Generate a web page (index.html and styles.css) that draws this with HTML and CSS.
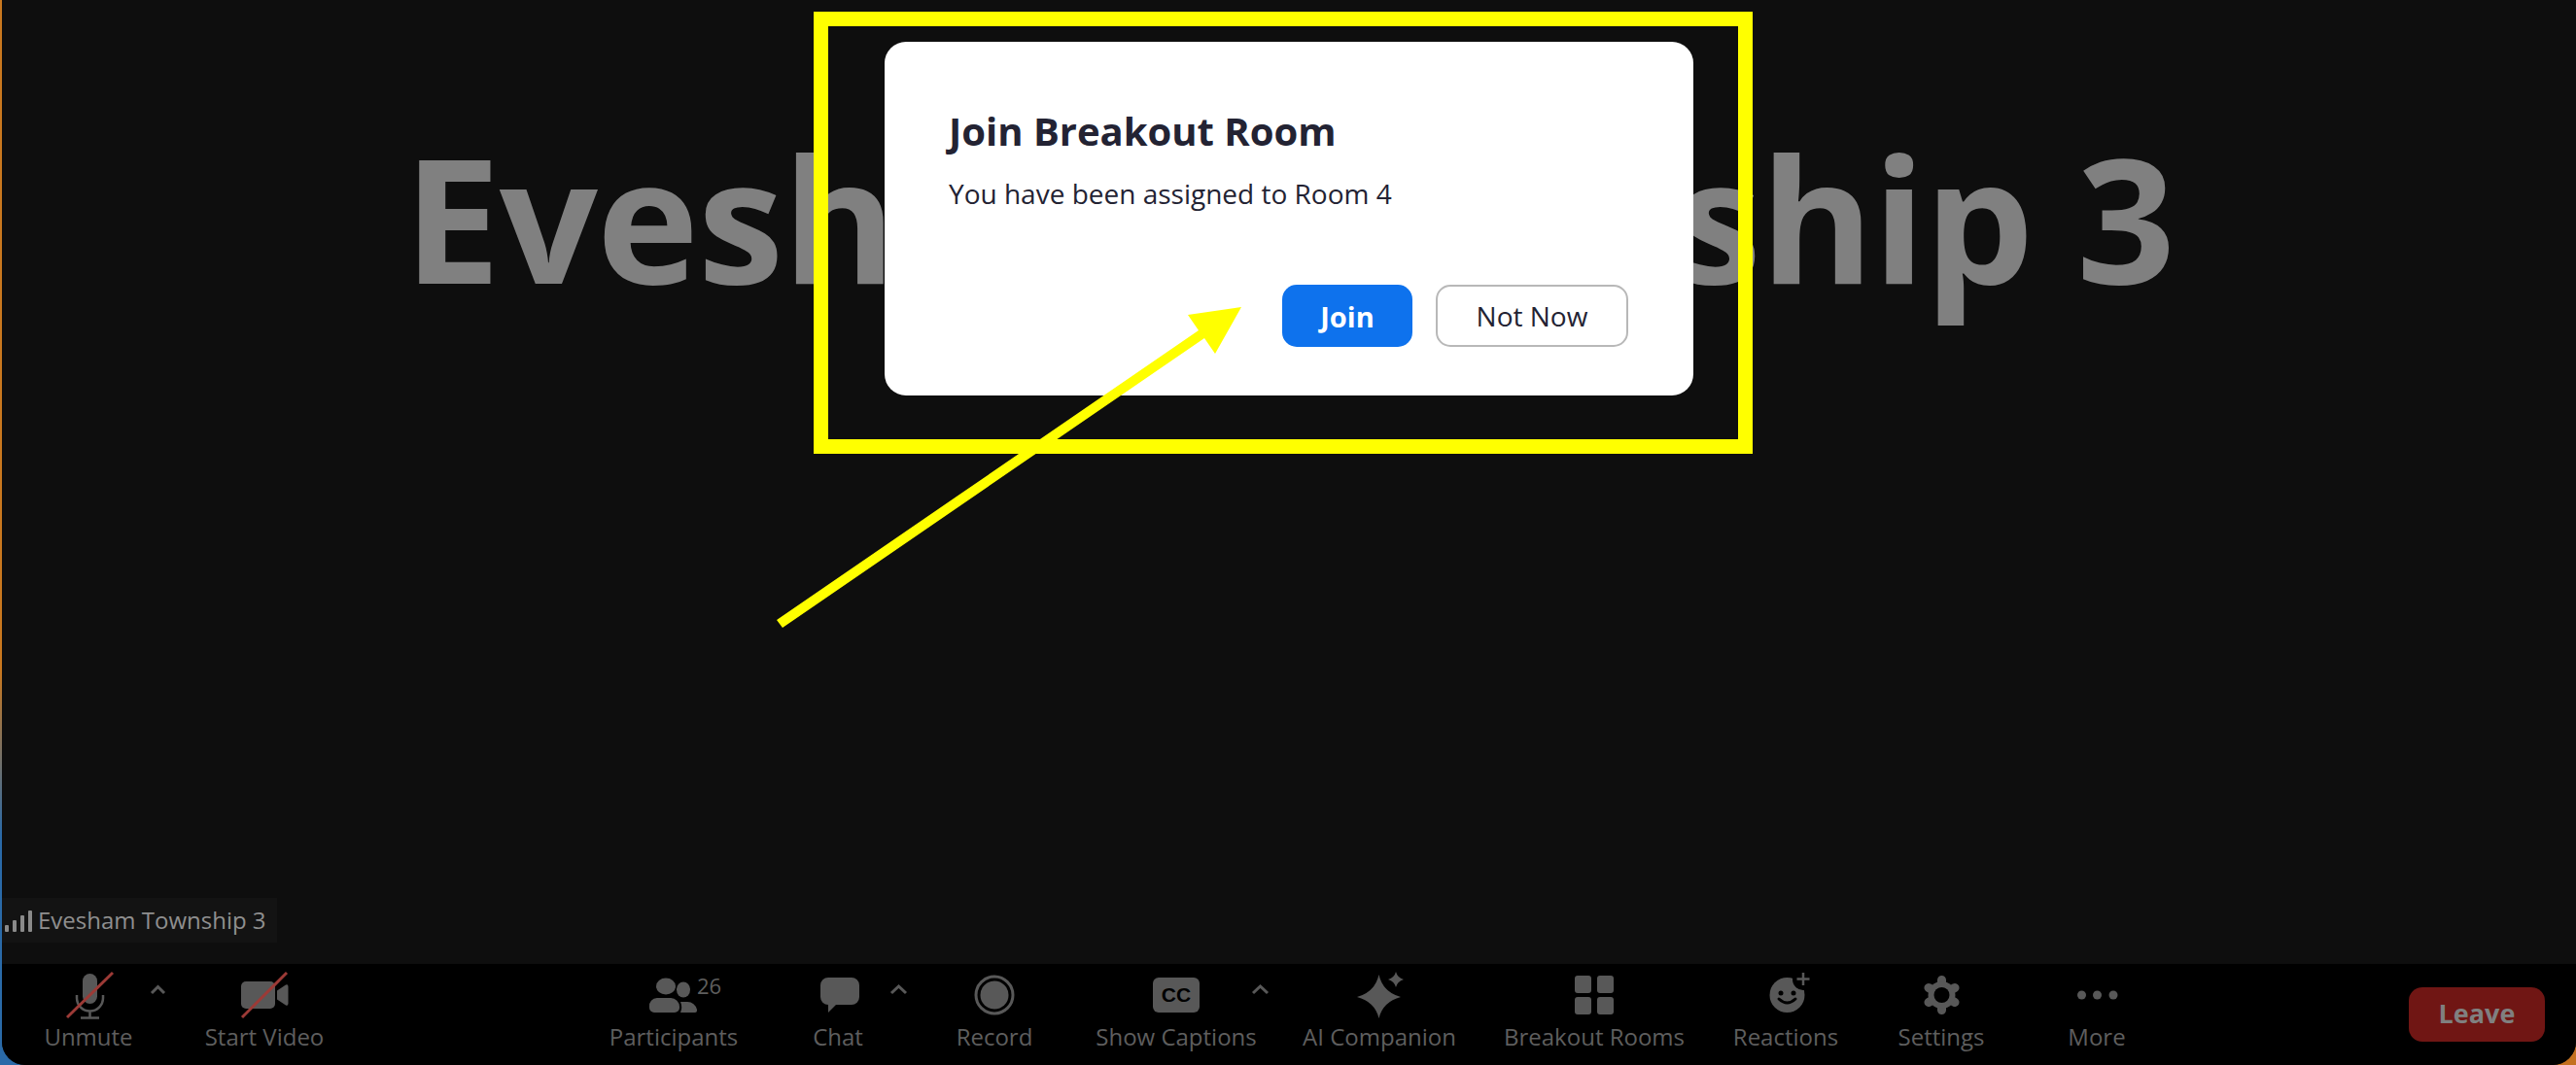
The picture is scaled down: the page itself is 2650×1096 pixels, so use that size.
FILE: index.html
```html
<!DOCTYPE html>
<html lang="en">
<head>
<meta charset="utf-8">
<title>Join Breakout Room</title>
<link rel="stylesheet" href="styles.css">
</head>
<body>
<div class="screen">
  <div class="app">
    <main class="stage">
      <h1 class="speaker">Evesham Township 3</h1>
      <div class="nametag">
        <span class="signal"><i class="b1"></i><i class="b2"></i><i class="b3"></i><i class="b4"></i></span>
        <span>Evesham Township 3</span>
      </div>
    </main>
    <nav class="toolbar">
      <div class="group-left">
        <div class="tool">
          <svg class="icon" viewBox="60 1000 62 52" width="62" height="52">
            <rect class="f" x="85" y="1002" width="15" height="31" rx="7.5"/>
            <path class="s thin" d="M79 1024v3a13.5 13.5 0 0 0 27 0v-3M92.500 1041v6M83 1047.500h19"/>
            <path class="slash" d="M116 1001 69 1047"/>
            <path class="s chev" d="M156 1022l6.500-6.500 6.500 6.500"/>
          </svg>
          <span class="label">Unmute</span>
        </div>
        <div class="tool">
          <svg class="icon" viewBox="241 1000 62 52" width="62" height="52">
            <rect class="f" x="248" y="1010" width="35" height="28" rx="5"/>
            <path class="f" d="M285 1019.500l9-6q2.500-1 2.500 2v17q0 3-2.500 2l-9-6z"/>
            <path class="slash" d="M295 1001 249 1047"/>
          </svg>
          <span class="label">Start Video</span>
        </div>
      </div>
      <div class="group-center">
        <div class="tool">
          <svg class="icon" viewBox="662 1000 62 52" width="62" height="52">
            <ellipse class="f" cx="685" cy="1015" rx="10" ry="8.500"/>
            <ellipse class="f" cx="703" cy="1018.500" rx="7" ry="8"/>
            <path class="f" d="M668 1036a8 8 0 0 1 8-9h14a9 9 0 0 1 9 9v1a5 5 0 0 1-5 5h-21a5 5 0 0 1-5-5z"/>
            <path class="f" d="M700 1031h7a10 10 0 0 1 10 8v1a2 2 0 0 1-2 2h-15a14 14 0 0 0 0-11z"/>
            <text class="count" x="717" y="1023">26</text>
          </svg>
          <span class="label">Participants</span>
        </div>
        <div class="tool">
          <svg class="icon" viewBox="831 1000 62 52" width="62" height="52">
            <path class="f" d="M852 1006h24a8 8 0 0 1 8 8v12a8 8 0 0 1-8 8h-16l-8 8v-8a8 8 0 0 1-8-8v-12a8 8 0 0 1 8-8z"/>
            <path class="s chev" d="M917 1022l7.500-7 7.500 7"/>
          </svg>
          <span class="label">Chat</span>
        </div>
        <div class="tool">
          <svg class="icon" viewBox="992 1000 62 52" width="62" height="52">
            <circle class="s" cx="1023" cy="1024" r="19"/>
            <circle class="f" cx="1023" cy="1024" r="14.500"/>
          </svg>
          <span class="label">Record</span>
        </div>
        <div class="tool">
          <svg class="icon" viewBox="1179 1000 62 52" width="62" height="52">
            <rect class="f" x="1186" y="1006" width="48" height="36" rx="6"/>
            <text class="cc" x="1210" y="1031">CC</text>
            <path class="s chev" d="M1289 1022l7.500-7 7.500 7"/>
          </svg>
          <span class="label">Show Captions</span>
        </div>
        <div class="tool">
          <svg class="icon" viewBox="1388 1000 62 52" width="62" height="52">
            <path class="f" d="M1418.500 1003q4 18 22.500 23-18.500 5-22.500 22-4-17-22.500-22 18.500-5 22.500-23z"/>
            <path class="f" d="M1436 1000q1.500 6 8 8-6.500 2-8 8-1.500-6-8-8 6.500-2 8-8z"/>
          </svg>
          <span class="label">AI Companion</span>
        </div>
        <div class="tool">
          <svg class="icon" viewBox="1609 1000 62 52" width="62" height="52">
            <rect class="f" x="1620" y="1004" width="17" height="18" rx="3"/>
            <rect class="f" x="1643" y="1004" width="17" height="18" rx="3"/>
            <rect class="f" x="1620" y="1026" width="17" height="18" rx="3"/>
            <rect class="f" x="1643" y="1026" width="17" height="18" rx="3"/>
          </svg>
          <span class="label">Breakout Rooms</span>
        </div>
        <div class="tool">
          <svg class="icon" viewBox="1806 1000 62 52" width="62" height="52">
            <circle class="f" cx="1838.500" cy="1024" r="18"/>
            <circle class="cut" cx="1855" cy="1008" r="11"/>
            <circle class="k" cx="1832" cy="1022" r="2.500"/>
            <circle class="k" cx="1845" cy="1022" r="2.500"/>
            <path class="smile" d="M1830 1028q8.500 8 17 0"/>
            <path class="plus" d="M1855 1001v13M1848.500 1007.500h13"/>
          </svg>
          <span class="label">Reactions</span>
        </div>
        <div class="tool">
          <svg class="icon" viewBox="1966 1000 62 52" width="62" height="52">
            <path class="gear" d="M1997.500 1008.500v31M1984 1016.500l27 15M2011 1016.500l-27 15"/>
            <circle class="f" cx="1997.500" cy="1024" r="14"/>
            <circle class="k" cx="1997.500" cy="1024" r="8"/>
          </svg>
          <span class="label">Settings</span>
        </div>
        <div class="tool">
          <svg class="icon" viewBox="2126 1000 62 52" width="62" height="52">
            <circle class="f" cx="2141.500" cy="1024" r="4.500"/>
            <circle class="f" cx="2157.500" cy="1024" r="4.500"/>
            <circle class="f" cx="2174" cy="1024" r="4.500"/>
          </svg>
          <span class="label">More</span>
        </div>
      </div>
      <button class="leave">Leave</button>
    </nav>
  </div>

  <section class="dialog">
    <h2 class="dialog-title">Join Breakout Room</h2>
    <p class="dialog-text">You have been assigned to Room 4</p>
    <div class="dialog-actions">
      <button class="btn btn-primary">Join</button>
      <button class="btn btn-outline">Not Now</button>
    </div>
  </section>

  <div class="callout-box"></div>
  <svg class="callout-arrow" viewBox="0 0 2650 1096" width="2650" height="1096">
    <polygon points="799,638 1233,340 1222,324 1277,316 1250,364 1239,348 805,646"/>
  </svg>
</div>
</body>
</html>
```

FILE: styles.css
```css
* { box-sizing: border-box; }
html, body { margin: 0; padding: 0; height: 100%; }
body {
  font-family: "Open Sans", "Liberation Sans", sans-serif;
  overflow: hidden;
  background:
    linear-gradient(to bottom, #c9781f 0, #c9781f 690px, #2a6aa8 860px, #2a6aa8 100%) left top / 50% 100% no-repeat,
    #c4701f;
}
.screen { position: relative; width: 2650px; height: 1096px; }
.app {
  margin-left: 2px;
  height: 1096px;
  display: flex;
  flex-direction: column;
  background: #0e0e0e;
  border-radius: 0 0 24px 24px;
  overflow: hidden;
}

.stage { flex: 1; display: flex; flex-direction: column; }
.speaker {
  margin: 0;
  padding-top: 112px;
  text-align: center;
  font-size: 178px;
  letter-spacing: -1.2px;
  line-height: 222px;
  font-weight: 700;
  color: #808080;
  white-space: nowrap;
}
.nametag {
  margin-top: auto;
  margin-bottom: 22px;
  width: 283px;
  height: 46px;
  padding-left: 37px;
  padding-bottom: 2px;
  display: flex;
  align-items: center;
  position: relative;
  background: #131313;
  color: #8f8f8f;
  font-size: 24px;
  white-space: nowrap;
}
.signal {
  position: absolute;
  left: 3px;
  bottom: 11px;
  display: flex;
  align-items: flex-end;
  gap: 4px;
}
.signal i { display: block; width: 4px; background: #8a8a8a; border-radius: 1px; }
.signal .b1 { height: 7px; }
.signal .b2 { height: 12px; }
.signal .b3 { height: 17px; }
.signal .b4 { height: 22px; }

.toolbar {
  height: 104px;
  flex: none;
  display: flex;
  background: #000;
  padding-top: 8px;
  padding-right: 32px;
}
.group-left { display: grid; grid-template-columns: 178px 184px; }
.group-center {
  margin-left: 244px;
  display: grid;
  grid-template-columns: 170px 168px 154px 220px 198px 244px 150px 170px 150px;
}
.tool { display: flex; flex-direction: column; align-items: center; }
.icon { display: block; overflow: visible; flex: none; }
.label {
  color: #5e5e5e;
  font-size: 24px;
  line-height: 30px;
  white-space: nowrap;
}
.f { fill: #585858; }
.k { fill: #000; }
.cut { fill: #000; }
.s { fill: none; stroke: #585858; stroke-width: 3; }
.thin { stroke-width: 2.500; }
.chev { stroke-width: 3; }
.slash { fill: none; stroke: #9c3a36; stroke-width: 3; }
.smile { fill: none; stroke: #000; stroke-width: 3; stroke-linecap: round; }
.plus { fill: none; stroke: #585858; stroke-width: 2.500; }
.gear { fill: none; stroke: #585858; stroke-width: 9; stroke-linecap: round; }
.count { fill: #5e5e5e; font-size: 22px; }
.cc { fill: #000; font-family: "Liberation Sans", sans-serif; font-weight: 700; font-size: 21px; text-anchor: middle; }

.leave {
  margin-left: auto;
  margin-top: 16px;
  width: 140px;
  height: 56px;
  border: 0;
  border-radius: 14px;
  background: #701614;
  color: #808080;
  font-family: inherit;
  font-size: 27px;
  font-weight: 700;
  padding: 0 0 4px;
}

.dialog {
  position: absolute;
  left: 910px;
  top: 43px;
  width: 832px;
  height: 364px;
  padding: 66px 67px 50px 66px;
  background: #fff;
  border-radius: 22px;
  display: flex;
  flex-direction: column;
  color: #232333;
}
.dialog-title { margin: 0; font-size: 40px; line-height: 52px; font-weight: 700; }
.dialog-text { margin: 19px 0 0; font-size: 28px; line-height: 38px; }
.dialog-actions { margin-top: auto; display: flex; justify-content: flex-end; gap: 24px; }
.btn {
  height: 64px;
  border-radius: 15px;
  font-family: inherit;
  font-size: 28px;
  padding: 0;
}
.btn-primary { width: 134px; border: 0; background: #0e72ed; color: #fff; font-weight: 700; font-size: 29px; }
.btn-outline { width: 198px; border: 2px solid #b8b8b8; background: #fff; color: #232333; }

.callout-box {
  position: absolute;
  left: 837px;
  top: 12px;
  width: 966px;
  height: 455px;
  border: 15px solid #ffff00;
}
.callout-arrow { position: absolute; left: 0; top: 0; pointer-events: none; }
.callout-arrow polygon { fill: #ffff00; }
```
